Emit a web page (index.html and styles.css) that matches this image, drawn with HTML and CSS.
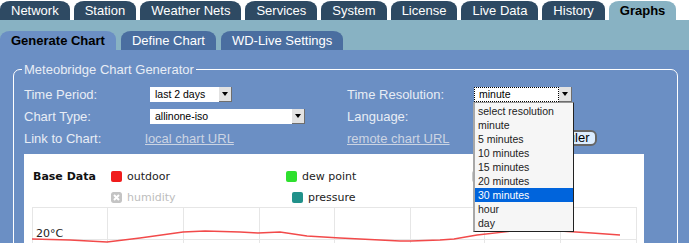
FILE: index.html
```html
<!DOCTYPE html>
<html lang="en">
<head>
  <meta charset="UTF-8">
  <title>Meteobridge - Graphs</title>
  <link rel="stylesheet" href="styles.css">
</head>
<body>

  <!-- Main tabs -->
  <div class="mainnav">
    <a class="tab">Network</a>
    <a class="tab">Station</a>
    <a class="tab">Weather Nets</a>
    <a class="tab">Services</a>
    <a class="tab">System</a>
    <a class="tab">License</a>
    <a class="tab">Live Data</a>
    <a class="tab">History</a>
    <a class="tab active">Graphs</a>
  </div>

  <!-- Sub tabs -->
  <div class="subnav">
    <a class="subtab active">Generate Chart</a>
    <a class="subtab">Define Chart</a>
    <a class="subtab">WD-Live Settings</a>
  </div>

  <div class="content">
    <fieldset class="generator">
      <legend>Meteobridge Chart Generator</legend>

      <div class="form-grid">
        <label>Time Period:</label>
        <div><span class="select w-period"><span class="value">last 2 days</span><span class="arrow"></span></span></div>
        <label>Time Resolution:</label>
        <div>
          <span class="select w-res focused">
            <span class="value">minute</span><span class="arrow"></span>
            <!-- open option list -->
            <ul class="dropdown">
              <li>select resolution</li>
              <li>minute</li>
              <li>5 minutes</li>
              <li>10 minutes</li>
              <li>15 minutes</li>
              <li>20 minutes</li>
              <li class="selected">30 minutes</li>
              <li>hour</li>
              <li>day</li>
            </ul>
          </span>
        </div>

        <label>Chart Type:</label>
        <div><span class="select w-type"><span class="value">allinone-iso</span><span class="arrow"></span></span></div>
        <label>Language:</label>
        <div></div>

        <label>Link to Chart:</label>
        <div><a class="link link-local">local chart URL</a></div>
        <div><a class="link">remote chart URL</a></div>
        <div><button class="btn">Scheduler</button></div>
      </div>

      <!-- Chart preview -->
      <div class="chart">
        <div class="legend">
          <b class="legend-title">Base Data</b>
          <span class="item"><i class="swatch red"></i>outdoor</span>
          <span class="item"><i class="swatch green"></i>dew point</span>
          <span class="item"><i class="swatch grey"></i></span>
          <span></span>
          <span class="item off">
            <svg class="swatch" width="11" height="11" viewBox="0 0 11 11"><rect width="11" height="11" rx="2" fill="#c4c4c4"/><path d="M3 3l5 5M8 3l-5 5" stroke="#fff" stroke-width="2"/></svg>humidity
          </span>
          <span class="item shift"><i class="swatch teal"></i>pressure</span>
        </div>

        <svg class="plot" width="605" height="40" viewBox="0 0 605 40">
          <g stroke="#e6e6e6" stroke-width="1">
            <line x1="0" y1="0.5" x2="604" y2="0.5"/>
            <line x1="0" y1="32.5" x2="604" y2="32.5"/>
            <line x1="0.5" y1="0" x2="0.5" y2="40"/>
            <line x1="75.5" y1="0" x2="75.5" y2="40"/>
            <line x1="151.5" y1="0" x2="151.5" y2="40"/>
            <line x1="227.5" y1="0" x2="227.5" y2="40"/>
            <line x1="302.5" y1="0" x2="302.5" y2="40"/>
            <line x1="378.5" y1="0" x2="378.5" y2="40"/>
            <line x1="452.5" y1="0" x2="452.5" y2="40"/>
            <line x1="528.5" y1="0" x2="528.5" y2="40"/>
            <line x1="604.5" y1="0" x2="604.5" y2="40"/>
          </g>
          <polyline fill="none" stroke="#f24a4a" stroke-width="1.3"
            points="0,32 38,33 75,35 108,31 151,25 173,24 208,25 226,26 248,25 275,29 308,31 368,34 379,34 408,33 422,32 445,28 498,22 528,24 560,26 588,28"/>
          <text x="4" y="30" class="axis">20°C</text>
        </svg>
      </div>
    </fieldset>
  </div>

</body>
</html>
```

FILE: styles.css
```css
body {
  margin: 0;
  font-family: "Liberation Sans", Arial, sans-serif;
  font-size: 13px;
  background: #fff;
  overflow: hidden;
}

a {
  cursor: pointer;
}

/* Main tabs */
.mainnav {
  display: flex;
  gap: 4px;
  padding-top: 1px;
  height: 19px;
}

.tab {
  background: #2e4a63;
  color: #fff;
  padding: 1px 11px 0;
  line-height: 18px;
  border-radius: 10px 10px 0 0 / 8px 8px 0 0;
}

.tab.active {
  background: #88b2c3;
  color: #000;
  font-weight: 700;
}

/* Sub tabs */
.subnav {
  display: flex;
  align-items: flex-end;
  gap: 5px;
  height: 30px;
  background: #88b2c3;
}

.subtab {
  background: #4a6ea0;
  color: #fff;
  padding: 1px 11px 0;
  line-height: 18px;
  border-radius: 10px 10px 0 0 / 8px 8px 0 0;
}

.subtab.active {
  background: #6b8fc4;
  color: #000;
  font-weight: 700;
}

/* Content */
.content {
  background: #6b8fc4;
  padding: 12px 11px 0 13px;
  height: 181px;
  overflow: hidden;
}

.generator {
  margin: 0;
  border: 1px solid #fff;
  border-radius: 7px;
  padding: 0 10px;
  height: 220px;
}

.generator legend {
  padding: 0 2px;
  margin-left: -2px;
  line-height: 15px;
  color: #e8edf5;
}

.form-grid {
  display: grid;
  grid-template-columns: 121px 202px 122px 1fr;
  grid-auto-rows: 22px;
  align-items: center;
  margin-top: 6px;
  color: #e8edf5;
}

.link {
  color: #cbd4e3;
  text-decoration: underline;
}

/* Select look-alike */
.select {
  position: relative;
  display: inline-flex;
  height: 15px;
  margin-left: 5px;
  background: #fff;
  color: #000;
  font-size: 10.5px;
  vertical-align: middle;
}

.select .value {
  flex: 1;
  padding-left: 5px;
  line-height: 15px;
}

.select .arrow {
  position: relative;
  width: 13px;
  background: #e2e2e2;
  border-right: 1px solid #6e6e6e;
  border-bottom: 1px solid #6e6e6e;
  box-sizing: border-box;
}

.select .arrow::after {
  content: "";
  position: absolute;
  left: 3px;
  top: 5px;
  border-left: 3px solid transparent;
  border-right: 3px solid transparent;
  border-top: 4px solid #000;
}

.select.focused .value {
  border: 1px dotted #000;
  padding-left: 4px;
  line-height: 13px;
}

.w-period { width: 82px; }
.w-type { width: 155px; }
.w-res { width: 98px; }

.dropdown {
  position: absolute;
  top: 15px;
  left: -1px;
  z-index: 5;
  width: 98px;
  margin: 0;
  padding: 1px 0;
  list-style: none;
  background: #f6f6f6;
  border: 1px solid #222;
  border-left: 2px solid #a8a8a8;
  border-top-color: #999;
}

.dropdown li {
  height: 14px;
  line-height: 14px;
  padding-left: 3px;
  color: #222;
  font-size: 10.5px;
  white-space: nowrap;
}

.dropdown li.selected {
  background: #0064dc;
  color: #fff;
}

.btn {
  margin-left: 55px;
  height: 16px;
  padding: 0 5px;
  font-family: inherit;
  font-size: 13px;
  line-height: 12px;
  color: #000;
  background: #dcedff;
  border: 2px solid #666;
  border-radius: 6px;
}

/* Chart preview */
.chart {
  width: 620px;
  margin-top: 5px;
  padding: 15px 0 0 9px;
  box-sizing: border-box;
  height: 120px;
  background: #fff;
  font-family: "DejaVu Sans", Verdana, sans-serif;
  font-size: 11px;
  color: #222;
}

.legend {
  display: grid;
  grid-template-columns: 78px 175px 186px auto;
  grid-auto-rows: 14px;
  row-gap: 7px;
  align-items: center;
}

.legend-title {
  font-weight: 700;
  color: #111;
}

.item {
  display: flex;
  align-items: center;
}

.item.off {
  color: #bdbdbd;
}

.item.shift {
  margin-left: 6px;
}

.swatch {
  display: inline-block;
  width: 11px;
  height: 11px;
  margin-right: 5px;
  border-radius: 2px;
}

.swatch.red { background: #f01c1c; }
.swatch.green { background: #2ee02e; }
.swatch.teal { background: #21918a; }
.swatch.grey { background: #c8c8c8; }

.plot {
  display: block;
  margin: 3px 0 0 -1px;
}

.axis {
  font-family: "DejaVu Sans", Verdana, sans-serif;
  font-size: 11px;
  fill: #222;
}
```
